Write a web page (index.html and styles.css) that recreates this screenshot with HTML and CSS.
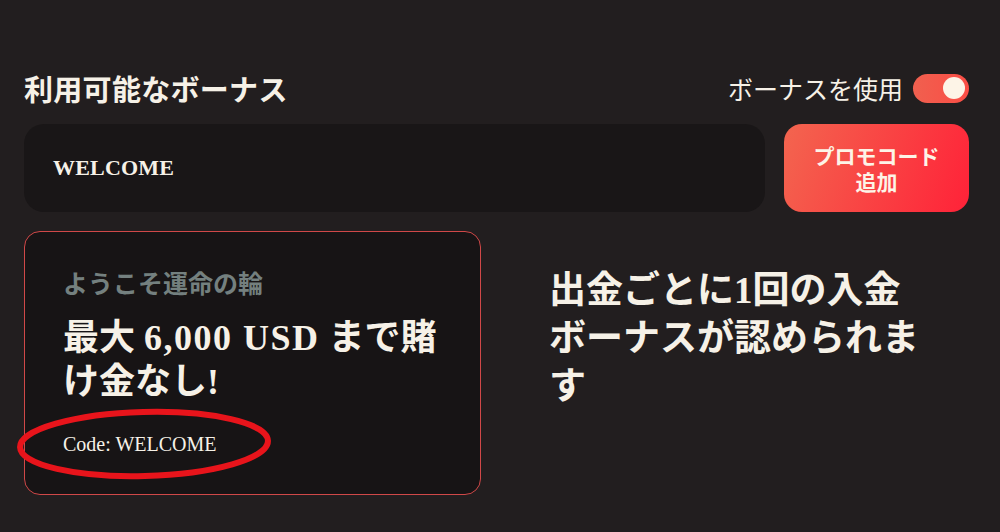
FILE: index.html
```html
<!DOCTYPE html>
<html lang="ja">
<head>
    <meta charset="UTF-8">
    <meta name="viewport" content="width=device-width, initial-scale=1.0">
    <title>ボーナス</title>
    <link rel="stylesheet" href="styles.css">
</head>
<body>
    <div class="bonus-panel">
        <!-- Header row -->
        <div class="panel-head">
            <h2 class="panel-title">利用可能なボーナス</h2>
            <label class="use-bonus">
                <span>ボーナスを使用</span>
                <span class="toggle"><span class="toggle-knob"></span></span>
            </label>
        </div>

        <!-- Promo code entry -->
        <div class="promo-row">
            <div class="promo-input">WELCOME</div>
            <button class="promo-btn"><span>プロモコード</span><span>追加</span></button>
        </div>

        <!-- Bonus card + note -->
        <div class="bonus-row">
            <div class="bonus-card">
                <div class="card-sub">ようこそ運命の輪</div>
                <div class="card-title">最大 <span class="num">6,000 USD</span> まで賭け金なし!</div>
                <div class="card-code">Code: WELCOME</div>
                <svg class="code-mark" width="262" height="76" viewBox="0 0 262 76">
                    <ellipse cx="129" cy="38" rx="124" ry="32" fill="none" stroke="#e8141b" stroke-width="6" transform="rotate(-1.5 129 38)"/>
                </svg>
            </div>
            <p class="bonus-note">出金ごとに1回の入金ボーナスが認められます</p>
        </div>
    </div>
</body>
</html>
```

FILE: styles.css
```css
body {
    margin: 0;
    background-color: #221e1f;
    color: #f6f1e7;
    font-family: "Liberation Serif", "Noto Sans CJK JP", serif;
}

.bonus-panel {
    padding: 70px 31px 0 24px;
}

.panel-head {
    display: flex;
    justify-content: space-between;
    align-items: center;
    height: 36px;
}

.panel-title {
    margin: 0;
    font-family: "Noto Sans CJK JP", sans-serif;
    font-size: 29px;
    font-weight: 700;
    letter-spacing: 0.3px;
}

.use-bonus {
    display: flex;
    align-items: center;
    gap: 10px;
    font-family: "Noto Sans CJK JP", sans-serif;
    font-size: 25px;
}

.toggle {
    display: flex;
    align-items: center;
    justify-content: flex-end;
    width: 56px;
    height: 29px;
    padding: 0 4px;
    box-sizing: border-box;
    border-radius: 15px;
    background: linear-gradient(90deg, #f0604f, #fb4d45);
}

.toggle-knob {
    width: 22px;
    height: 22px;
    border-radius: 50%;
    background-color: #fdf4e7;
}

.promo-row {
    display: flex;
    gap: 19px;
    margin-top: 18px;
    height: 88px;
}

.promo-input {
    flex-grow: 1;
    display: flex;
    align-items: center;
    padding-left: 29px;
    border-radius: 20px;
    background-color: #191617;
    font-size: 22px;
    font-weight: bold;
    letter-spacing: 0.2px;
}

.promo-btn {
    display: flex;
    flex-direction: column;
    align-items: center;
    justify-content: center;
    width: 185px;
    border: none;
    border-radius: 18px;
    background: linear-gradient(110deg, #f3654f, #ff2238);
    color: #fdf4e7;
    font-family: "Noto Sans CJK JP", sans-serif;
    font-size: 21px;
    font-weight: 700;
    line-height: 26px;
    cursor: pointer;
}

.bonus-row {
    display: flex;
    margin-top: 19px;
}

.bonus-card {
    position: relative;
    width: 457px;
    height: 264px;
    box-sizing: border-box;
    padding: 32px 38px 0 38px;
    border: 1.5px solid #d04848;
    border-radius: 16px;
    background-color: #171415;
}

.card-sub {
    font-family: "Noto Sans CJK JP", sans-serif;
    font-size: 25px;
    font-weight: 700;
    color: #74807f;
    line-height: 36px;
}

.card-title {
    margin-top: 16px;
    font-size: 36px;
    font-weight: bold;
    line-height: 44px;
}

.card-title .num {
    letter-spacing: 1.5px;
}

.card-code {
    margin-top: 29px;
    font-size: 20px;
}

.code-mark {
    position: absolute;
    left: -10px;
    top: 174px;
}

.bonus-note {
    margin: 36px 0 0 68px;
    width: 380px;
    font-size: 37px;
    font-weight: bold;
    line-height: 48px;
}
```
